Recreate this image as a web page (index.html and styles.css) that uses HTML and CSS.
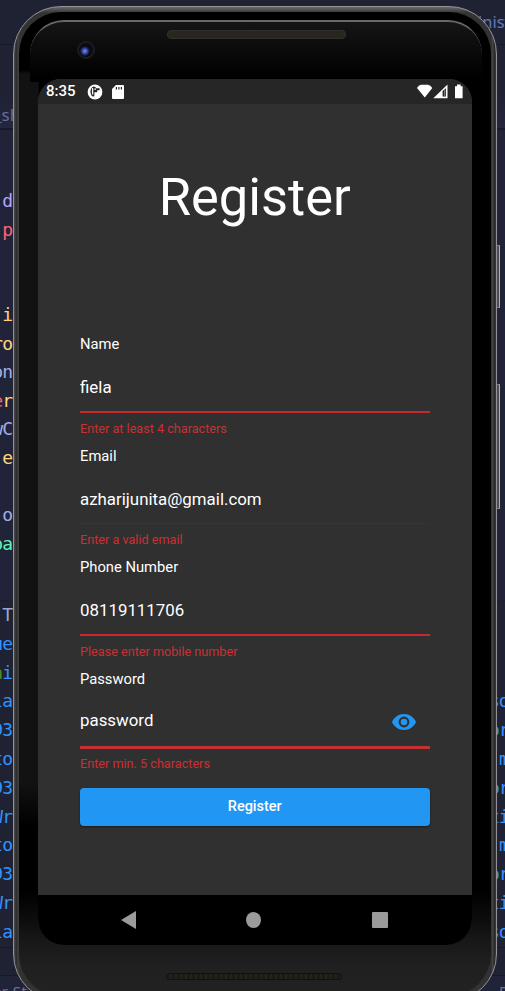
FILE: index.html
```html
<!DOCTYPE html>
<html lang="en">
<head>
<meta charset="utf-8">
<title>Register</title>
<link rel="stylesheet" href="styles.css">
</head>
<body>
<div class="desktop">
  <div class="editor">
    <div class="tabs"><span>inist</span></div>
    <div class="crumbs"><span>_sh</span></div>
    <div class="code">
      <span class="lilac">d</span><span class="red">p</span><span></span><span></span>
      <span class="yellow">i</span><span class="yellow">ro</span><span class="blue">on</span><span class="yellow"><b class="red">e</b>r</span>
      <span class="blue">wC</span><span class="yellow">e</span><span></span><span class="blue">o</span><span class="mint">oa</span>
    </div>
    <div class="terminal">
      <div class="log log-left">
        <span class="plain">T</span><span>ue</span><span><b class="green">n</b>i</span><span>la</span><span>93</span><span>to</span>
        <span>93</span><span>Wr</span><span>to</span><span>93</span><span>Wr</span><span>la</span>
      </div>
      <div class="log log-right">
        <span></span><span></span><span></span><span>so</span><span>or</span><span class="in">m</span>
        <span>or</span><span>ti</span><span class="in">m</span><span>or</span><span>ti</span><span>so</span>
      </div>
    </div>
    <div class="status"></div>
    <div class="footer"><span>er St</span><span>D</span></div>
  </div>

  <div class="side-key power"></div>
  <div class="side-key volume"></div>

  <div class="phone">
    <div class="bezel">
      <div class="glass">
        <div class="camera"></div>
        <div class="speaker"></div>
        <div class="speaker speaker-low"></div>
      </div>
    </div>
  </div>

  <main class="screen">
    <header class="statusbar">
      <span class="clock">8:35</span>
      <svg class="s-app" width="16" height="16" viewBox="0 0 16 16"><circle cx="8" cy="8" r="7.4" fill="#fff"/><path d="M6.600 2.600Q3.400 4 3.400 7.800Q3.500 11 5.600 12.400Q7.400 13 7.400 11V8.200H10.200V6.200H12.600V4.200H8.800V3.200Z" fill="#262626"/><path d="M5.600 4V10.500M7.400 5.200H9" stroke="#fff" stroke-width="1.300"/></svg>
      <svg class="s-sd" width="12" height="14" viewBox="0 0 12 14"><path d="M4 0H11Q12 0 12 1V13Q12 14 11 14H1Q0 14 0 13V4Z" fill="#fff"/><path d="M4.4 2V4.6M6.9 2V4.6M9.4 2V4.6" stroke="#262626" stroke-width="1.2"/></svg>
      <svg class="s-net" width="46" height="15" viewBox="0 0 46 15"><path d="M0 4Q1.5 1 4 .7H11Q13.5 1 15.3 4L7.8 13.5Z" fill="#fff"/><path d="M16.3 14.2L30.5.5V14.2Z" fill="#fff"/><path d="M25.6 7L28.9 4.2V12.6H25.6Z" fill="#262626"/><path d="M27.6 5.6V12.5" stroke="#999" stroke-width=".8"/><path d="M38 2.2H40V.5H43.6V2.2H45.6V14.2H38Z" fill="#fff"/></svg>
    </header>
    <section class="content">
      <h1>Register</h1>
      <form class="form">
        <div class="field"><label>Name</label><div class="value">fiela</div><p>Enter at least 4 characters</p></div>
        <div class="field faint"><label>Email</label><div class="value">azharijunita@gmail.com</div><p>Enter a valid email</p></div>
        <div class="field"><label>Phone Number</label><div class="value">08119111706</div><p>Please enter mobile number</p></div>
        <div class="field focused"><label>Password</label>
          <div class="value"><span>password</span><svg width="24" height="16" viewBox="0 0 24 16"><path fill="#2196f3" fill-rule="evenodd" d="M12 0C6.5 0 2 3.3 0 8c2 4.700 6.500 8 12 8s10-3.300 12-8C22 3.300 17.500 0 12 0zm0 13.400a5.400 5.400 0 1 1 0-10.800 5.400 5.400 0 0 1 0 10.800zm0-8.700a3.300 3.300 0 1 0 0 6.600 3.300 3.300 0 0 0 0-6.600z"/></svg></div>
          <p>Enter min. 5 characters</p></div>
        <button type="button">Register</button>
      </form>
    </section>
    <nav class="navbar">
      <svg width="15" height="18" viewBox="0 0 15 18"><path d="M0 9L15 0V18Z" fill="#9b9b9b"/></svg>
      <svg width="15" height="16" viewBox="0 0 15 16"><ellipse cx="7.500" cy="8" rx="7.500" ry="8" fill="#9b9b9b"/></svg>
      <svg width="16" height="16" viewBox="0 0 16 16"><rect width="16" height="16" rx="1" fill="#9b9b9b"/></svg>
    </nav>
  </main>
</div>
</body>
</html>
```
FILE: styles.css
```css
* { box-sizing: border-box; }
body { margin: 0; background: #1f2233; }
.desktop {
  position: relative;
  width: 505px;
  height: 991px;
  overflow: hidden;
  font-family: Roboto, sans-serif;
}

/* editor behind the device */
.editor { height: 991px; background: #212438; font-family: "DejaVu Sans Mono", monospace; }
.tabs {
  height: 45px;
  border-bottom: 1px solid #171a28;
  background: #1f2233;
  font: 16.5px/44px "Noto Sans", sans-serif;
  color: #6278bf;
  padding-left: 478px;
  white-space: nowrap;
}
.crumbs {
  height: 85px;
  border-bottom: 2px solid #171a28;
  background: linear-gradient(#1f2233 60%, #24273d);
  padding-top: 56px;
  font: 17px/28px "Noto Sans", sans-serif;
  color: #626c9b;
}
.crumbs span { display: block; width: 16px; overflow: hidden; text-indent: -6px; }
.code { padding-top: 57px; height: 470px; }
.code span, .log span {
  display: flex;
  justify-content: flex-end;
  width: 12px;
  height: 28.55px;
  line-height: 28.55px;
  font-size: 18px;
  letter-spacing: -1px;
}
.code b, .log b { font-weight: normal; }
.lilac { color: #b4a5fb; }
.red { color: #ff6370; }
.yellow { color: #ffd580; }
.blue { color: #a2aee8; }
.mint { color: #5ff0b5; }
.green { color: #4a8a20; }
.terminal {
  display: flex;
  justify-content: space-between;
  height: 347px;
  background: #1f2233;
  border-top: 1px solid #1c1f30;
}
.log { color: #3391ff; }
.log span { height: 28.8px; line-height: 28.8px; }
.log .plain { color: #9da5d3; }
.log-right span { justify-content: flex-start; width: 9px; text-indent: -7px; }
.log-right .in { text-indent: 3px; }
.status { height: 29px; background: #1f2233; border-top: 1px solid #171a28; border-bottom: 1px solid #171a28; }
.footer {
  display: flex;
  justify-content: space-between;
  margin-left: -7px;
  font: 15px/31px "Noto Sans", sans-serif;
  color: #67709c;
}
.footer span:first-child { letter-spacing: .4px; }
.footer span:last-child { margin-right: -5px; }

/* device body */
.side-key {
  position: absolute;
  left: 496px;
  width: 4px;
  border: 1px solid #81797b;
  border-right-color: #b3abac;
  background: #504c50;
}
.power { top: 245px; height: 63px; }
.volume { top: 384px; height: 125px; }
.phone {
  position: absolute;
  left: 13px;
  top: 6px;
  width: 484px;
  height: 996px;
  border: 1px solid #949296;
  border-radius: 48px;
  background: linear-gradient(90deg, #464646 0 1px, #292929 2px, #404040 4px, #303030 6px, transparent 6px, transparent 476px, #303030 477px, #484848 479px, #252525 480px, #3b3b3b), linear-gradient(#686868, #333 6px, #222 60%, #333);
  padding: 5px;
}
.bezel {
  height: 984px;
  border-radius: 42px;
  background:
    linear-gradient(#000 58px, transparent 62px, transparent 770px, #000 815px, #000 880px, #181818 930px, #202020 955px, #222),
    linear-gradient(90deg, #121212 0 19px, #000 20px);
  padding: 8px 9px 7px 11px;
}
.glass {
  height: 100%;
  position: relative;
}
.glass::before {
  content: "";
  display: block;
  height: 60px;
  border-top: 2px solid #686868;
  border-radius: 34px 34px 0 0;
  background: linear-gradient(#151515, #020202 50px, #000);
}
.camera {
  position: absolute;
  left: 47px;
  top: 21px;
  width: 18px;
  height: 18px;
  border-radius: 50%;
  border: 2px solid #1c1c1f;
  background: radial-gradient(circle at 42% 58%, #617be0 0 1px, #293a87 3px, #090a16 5px);
}
.speaker {
  position: absolute;
  left: 137px;
  top: 10px;
  width: 179px;
  height: 9px;
  border: 1px solid #303030;
  border-radius: 4px;
  background: #29251f;
}
.speaker-low { top: auto; bottom: 9px; width: 176px; height: 7px; border-color: #111; background: repeating-linear-gradient(90deg, #1c1a15 0 3px, #26231d 3px 5px); left: 136px; }

/* app screen */
.screen {
  position: absolute;
  left: 38px;
  top: 79px;
  width: 433.5px;
  height: 866px;
  border-radius: 23px 23px 26px 26px;
  overflow: hidden;
  background: #303030;
  display: flex;
  flex-direction: column;
}
.statusbar {
  flex: none;
  height: 25px;
  background: #262626;
  display: flex;
  align-items: center;
  padding: 0 9px 0 8px;
  color: #fff;
}
.clock { width: 41px; font-size: 15px; font-weight: 500; line-height: 25px; white-space: nowrap; }
.s-sd { margin-left: 9px; }
.s-net { margin-left: auto; }
.content { height: 791px; padding: 0 42px; color: #fff; }
h1 { margin: 0; padding-top: 62px; height: 231px; text-align: center; font-size: 52.4px; line-height: 62px; font-weight: 400; }
.form { display: block; }
.field { height: 111.7px; }
.field label { display: block; height: 17px; font-size: 14.75px; line-height: 18px; }
.value {
  height: 61px;
  padding-top: 25px;
  font-size: 16.86px;
  line-height: 20px;
  border-bottom: 2px solid #c9282d;
}
.faint .value { border-bottom: 1px solid #482d2e; height: 60.500px; }
.field p { margin: 0; padding-top: 7.500px; font-size: 12.65px; line-height: 15px; color: #c93033; }
.faint p { padding-top: 8px; }
.focused { height: 118px; }
.focused .value { display: flex; justify-content: space-between; height: 62px; padding-top: 23px; padding-right: 14px; border-bottom: 3px solid #c53032; }
.focused svg { margin-top: 4px; }
.focused p { padding-top: 6.500px; }
button {
  display: block;
  width: 100%;
  height: 37.500px;
  border: 0;
  border-radius: 4px;
  background: #2196f3;
  color: #fff;
  font: 500 14.500px/38px Roboto, sans-serif;
  padding: 0;
  box-shadow: 0 1px 2px #1c1c1c;
}
.navbar {
  flex: none;
  height: 50px;
  background: #000;
  display: flex;
  align-items: center;
  justify-content: space-between;
  padding: 0 84px 0 83px;
}
```
